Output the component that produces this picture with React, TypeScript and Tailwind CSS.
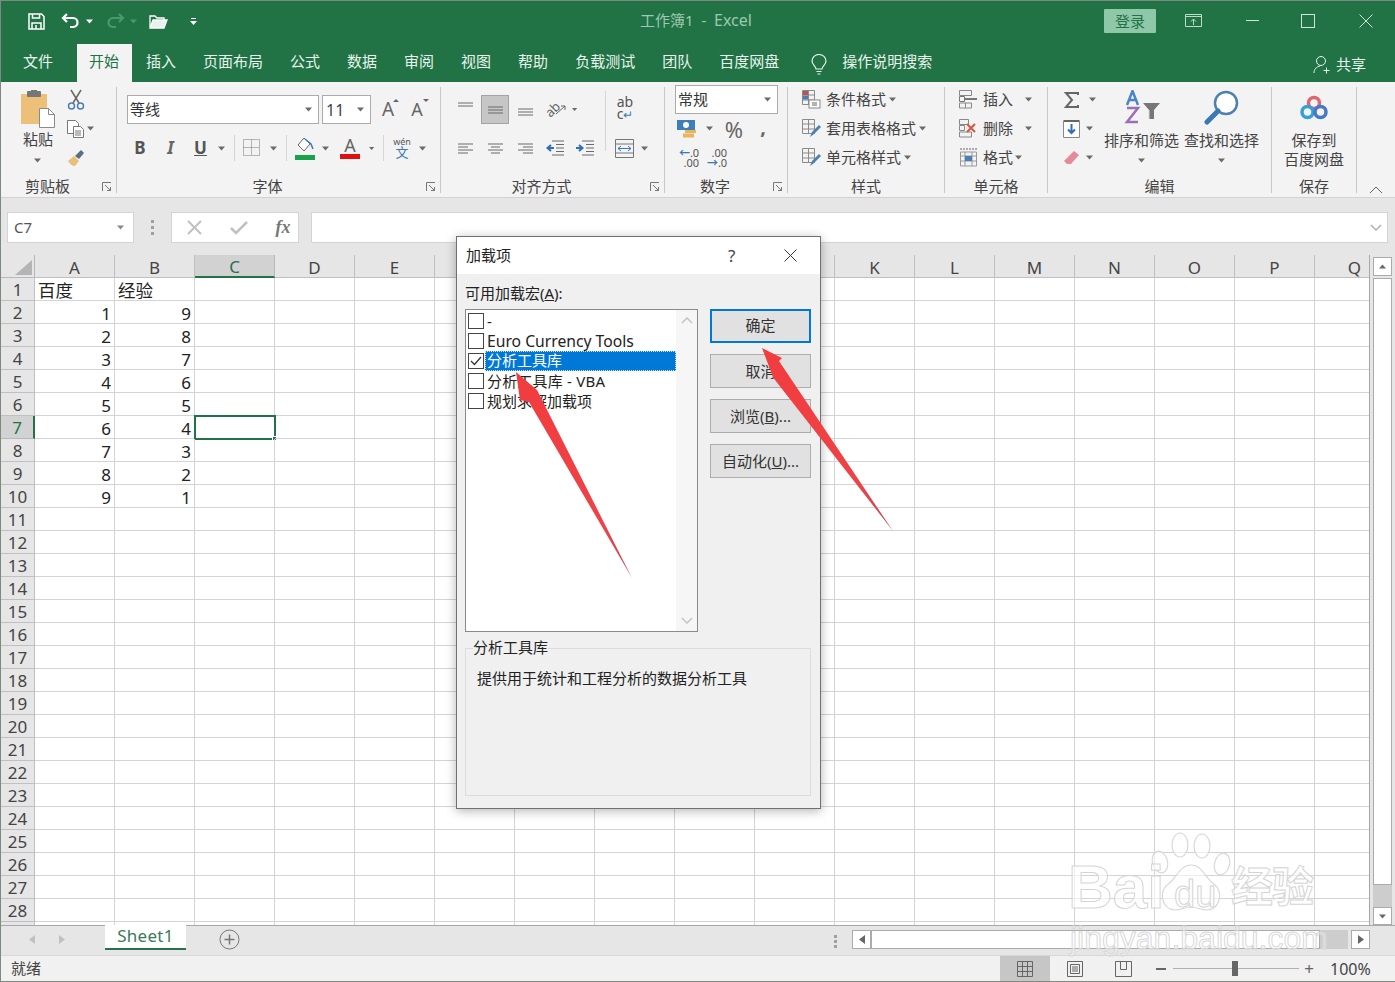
import React from "react";

const FONT = { fontFamily: '"Noto Sans","Noto Sans CJK SC",sans-serif' };

const Caret = ({ c = "#6a6a6a" }: { c?: string }) => (
  <svg width="8" height="5" viewBox="0 0 8 5"><path d="M0 .5h7L3.5 4.5z" fill={c} /></svg>
);
const Cell = ({ c, children }: { c: string; children?: React.ReactNode }) => (
  <div className={`flex items-center justify-center shrink-0 ${c}`}>{children}</div>
);
const CaretCell = ({ c }: { c: string }) => <Cell c={c}><Caret /></Cell>;
const Sep = ({ c }: { c: string }) => (
  <Cell c={c}><div className="w-px h-[26px] bg-[#d6d6d6]" /></Cell>
);

const Launcher = () => (
  <svg width="10" height="10" viewBox="0 0 10 10" fill="none" stroke="#777">
    <path d="M.5 9V.5H9M3 3l5.5 5.5M5 8.5h3.5V5" />
  </svg>
);

function Group({ w, label, launcher, children }: { w: string; label: string; launcher?: boolean; children: React.ReactNode }) {
  return (
    <div className={`shrink-0 h-[106px] mt-[5px] border-r border-[#c8c8c8] flex flex-col relative ${w}`}>
      <div className="h-[90px] flex flex-col">{children}</div>
      <div className={launcher
        ? "h-[16px] pr-[22px] flex items-center justify-center text-[15px] leading-none text-[#444] relative top-[1px]"
        : "h-[16px] flex items-center justify-center text-[15px] leading-none text-[#444] relative top-[1px]"}>{label}</div>
      {launcher && <div className="absolute right-[4px] bottom-[1px]"><Launcher /></div>}
    </div>
  );
}

/* Alignment lines */
const Lines = ({ kind }: { kind: "top" | "mid" | "bot" | "left" | "center" | "right" }) => {
  const p: Record<string, string> = {
    top: "M1 3h15M1 6h15",
    mid: "M1 5h15M1 8h15M1 11h15",
    bot: "M1 7h15M1 10h15M1 13h15",
    left: "M1 3h15M1 6h10M1 9h15M1 12h10",
    center: "M1 3h15M4 6h9M1 9h15M4 12h9",
    right: "M1 3h15M6 6h10M1 9h15M6 12h10",
  };
  return <svg width="17" height="15" viewBox="0 0 17 15" fill="none" stroke="#6a6a6a"><path d={p[kind]} /></svg>;
};
const Indent = ({ right }: { right?: boolean }) => (
  <svg width="20" height="17" viewBox="0 0 20 17" fill="none">
    <path d="M7 1h12M11 4.500h8M11 8h8M11 11.500h8M7 15h12" stroke="#6a6a6a" />
    <path d={right ? "M1 8h6M4 5l3.500 3L4 11" : "M9 8H3M6 5L2.500 8 6 11"} stroke="#2f6fb3" strokeWidth="2" />
  </svg>
);

const SmallGridIcon = ({ children }: { children?: React.ReactNode }) => (
  <svg width="19" height="19" viewBox="0 0 19 19" fill="none">
    <path d="M.5.5h12v14H.5zM.5 5h12M.5 10h12M6.500.5v14" stroke="#8a8a8a" />
    {children}
  </svg>
);

function FontGroup() {
  return (
    <Group w="w-[324px]" label="字体" launcher>
      <div className="flex items-center mt-[8px] pl-[10px]">
        <div className="w-[192px] h-[29px] bg-white border border-[#ababab] flex items-center justify-between pl-[2px] pr-[5px] text-[15px] text-[#333]">
          <span>等线</span><Caret />
        </div>
        <div className="ml-[3px] w-[49px] h-[29px] bg-white border border-[#ababab] flex items-center justify-between pl-[3px] pr-[5px] text-[16px] text-[#444]">
          <span>11</span><Caret />
        </div>
        <Cell c="w-[34px] text-[19px] text-[#666] relative">
          <span>A</span><svg className="absolute right-[6px] top-[3px]" width="6" height="4" viewBox="0 0 6 4"><path d="M0 4l3-3 3 3z" fill="#666" /></svg>
        </Cell>
        <Cell c="w-[24px] text-[18px] text-[#666] relative">
          <span>A</span><svg className="absolute right-0 top-[3px]" width="6" height="4" viewBox="0 0 6 4"><path d="M0 0l3 3 3-3z" fill="#666" /></svg>
        </Cell>
      </div>
      <div className="flex items-center h-[26px] mt-[11px] pl-[8px]">
        <Cell c="w-[30px] text-[17px] font-bold text-[#555]">B</Cell>
        <Cell c="w-[31px] text-[17px] italic font-bold text-[#666]">I</Cell>
        <Cell c="w-[29px] text-[17px] font-bold underline text-[#555]">U</Cell>
        <CaretCell c="w-[14px]" />
        <Sep c="w-[10px]" />
        <Cell c="w-[26px]">
          <svg width="18" height="18" viewBox="0 0 18 18" fill="none" stroke="#777" strokeDasharray="1 1"><path d="M.5.5h16v16H.5zM8.500.5v16M.5 8.500h16" /></svg>
        </Cell>
        <CaretCell c="w-[18px]" />
        <Sep c="w-[6px]" />
        <Cell c="w-[32px]">
          <svg width="22" height="24" viewBox="0 0 22 24" fill="none">
            <path d="M10 2L4 9l6 6 6-7z" stroke="#666" fill="#fff" />
            <path d="M11 3l6 5 2 5" stroke="#3a7ab8" strokeWidth="1.500" />
            <rect x="1" y="19" width="20" height="5" fill="#17a34a" />
          </svg>
        </Cell>
        <CaretCell c="w-[10px]" />
        <Cell c="w-[38px]">
          <div className="flex flex-col items-center">
            <span className="text-[18px] leading-[17px] text-[#666]">A</span>
            <div className="w-[20px] h-[5px] bg-[#e01010]" />
          </div>
        </Cell>
        <CaretCell c="w-[6px]" />
        <Sep c="w-[16px]" />
        <Cell c="w-[22px]">
          <div className="flex flex-col items-center leading-none">
            <span className="text-[9px] leading-[9px] text-[#555]">wén</span>
            <span className="text-[13px] leading-[13px] text-[#3a7ab8]">文</span>
          </div>
        </Cell>
        <CaretCell c="w-[20px]" />
      </div>
    </Group>
  );
}

function AlignGroup() {
  return (
    <Group w="w-[224px]" label="对齐方式" launcher>
      <div className="flex items-center mt-[8px] pl-[9px] h-[29px]">
        <Cell c="w-[30px] -mt-[4px]"><Lines kind="top" /></Cell>
        <Cell c="ml-[1px] w-[28px] h-[29px] bg-[#c6c6c6] border border-[#a4a4a4]"><Lines kind="mid" /></Cell>
        <Cell c="ml-px w-[30px]"><Lines kind="bot" /></Cell>
        <Cell c="w-[32px] relative">
          <span className="text-[13px] leading-none text-[#666] -rotate-45 -ml-[6px]">ab</span>
          <svg className="absolute left-[15px] top-[2px]" width="12" height="10" viewBox="0 0 12 10" fill="none" stroke="#666"><path d="M1 9l9-8M6 1h4v4" /></svg>
        </Cell>
        <CaretCell c="w-[6px]" />
        <Cell c="w-[27px]" />
        <div className="w-px h-[60px] bg-[#d6d6d6] self-start mt-[-4px]" />
        <Cell c="w-[38px] -mt-[2px]">
          <div className="relative text-[14px] leading-[12px] text-[#555]">
            <div>ab</div><div>c<span className="text-[#3a7ab8] text-[12px]">↵</span></div>
          </div>
        </Cell>
      </div>
      <div className="flex items-center h-[26px] mt-[11px] pl-[9px]">
        <Cell c="w-[30px]"><Lines kind="left" /></Cell>
        <Cell c="w-[30px]"><Lines kind="center" /></Cell>
        <Cell c="w-[30px]"><Lines kind="right" /></Cell>
        <Cell c="w-[30px]"><Indent /></Cell>
        <Cell c="w-[30px]"><Indent right /></Cell>
        <Cell c="w-[11px]" />
        <Cell c="w-[27px]">
          <svg width="19" height="19" viewBox="0 0 19 19" fill="none"><path d="M.5.5h18v18H.5zM.5 5h18M.5 14h18" stroke="#777" /><path d="M3 9.500h13M6 7L3 9.500 6 12M13 7l3 2.500-3 2.500" stroke="#3a7ab8" /></svg>
        </Cell>
        <CaretCell c="w-[14px]" />
      </div>
    </Group>
  );
}

function NumberGroup() {
  return (
    <Group w="w-[123px]" label="数字" launcher>
      <div className="ml-[10px] -mt-[2px] w-[103px] h-[29px] bg-white border border-[#ababab] flex items-center justify-between pl-[2px] pr-[5px] text-[15px] text-[#333]">
        <span>常规</span><Caret />
      </div>
      <div className="flex items-center h-[29px] ml-[12px]">
        <Cell c="w-[21px]">
          <svg width="21" height="20" viewBox="0 0 21 20" fill="none">
            <rect x="0" y="1" width="18" height="10" fill="#3d7ebd" /><circle cx="9" cy="6" r="3" fill="#fff" />
            <rect x="8" y="11" width="11" height="3" fill="#e8b45c" /><rect x="6" y="14.500" width="11" height="4" fill="#e8b45c" />
          </svg>
        </Cell>
        <CaretCell c="w-[24px]" />
        <Cell c="w-[24px] text-[22px] leading-none text-[#666]">%</Cell>
        <Cell c="w-[34px] text-[20px] font-bold leading-none text-[#666] -mt-[4px]">,</Cell>
      </div>
      <div className="flex items-center h-[29px] ml-[10px]">
        <Cell c="w-[28px]">
          <div className="text-[11px] leading-[10px] text-[#555] text-right">
            <div><span className="text-[#3a7ab8] font-bold">←</span>.0</div><div>.00</div>
          </div>
        </Cell>
        <Cell c="w-[28px]">
          <div className="text-[11px] leading-[10px] text-[#555] text-right">
            <div>.00</div><div><span className="text-[#3a7ab8] font-bold">→</span>.0</div>
          </div>
        </Cell>
      </div>
    </Group>
  );
}

const BrushIcon = () => <path d="M8 18l2-5 7-7 2 2-7 7z" fill="#4a7fb5" />;

function StyleRow({ icon, text }: { icon: React.ReactNode; text: string }) {
  return (
    <div className="flex items-center h-[29px] pl-[14px] first:-mt-[2px]">
      <div className="w-[24px] shrink-0">{icon}</div>
      <span className="text-[15px] text-[#444] leading-none">{text}</span>
      <div className="ml-[3px]"><Caret /></div>
    </div>
  );
}

function CellRow({ icon, text, caret }: { icon: React.ReactNode; text: string; caret: string }) {
  return (
    <div className="flex items-center h-[29px] pl-[14px] first:-mt-[2px]">
      <div className="w-[24px] shrink-0">{icon}</div>
      <span className="text-[15px] text-[#444] leading-none">{text}</span>
      <div className={caret}><Caret /></div>
    </div>
  );
}

function EditGroup() {
  return (
    <Group w="w-[224px]" label="编辑">
      <div className="flex h-full">
        <div className="w-[56px] shrink-0 flex flex-col -mt-[2px]">
          <div className="flex items-center h-[29px] pl-[12px]">
            <Cell c="w-[22px]"><svg width="15" height="16" viewBox="0 0 15 16" fill="none"><path d="M14 3V1H2l6 7-6 7h12v-2" stroke="#666" strokeWidth="2" /></svg></Cell>
            <Cell c="w-[22px]"><Caret /></Cell>
          </div>
          <div className="flex items-center h-[29px] pl-[12px]">
            <Cell c="w-[22px]"><svg width="17" height="18" viewBox="0 0 17 18" fill="none"><path d="M.5 1.500h16v16H.5z" stroke="#888" fill="#fff" /><path d="M.5 1h16" stroke="#666" strokeWidth="2" /><path d="M8.500 4v9M5 9.500l3.500 3.500L12 9.500" stroke="#2f6fb3" strokeWidth="2" /></svg></Cell>
            <Cell c="w-[16px]"><Caret /></Cell>
          </div>
          <div className="flex items-center h-[29px] pl-[12px]">
            <Cell c="w-[22px]"><svg width="17" height="16" viewBox="0 0 17 16"><path d="M11 1l5 4-8 9H4L1 11z" fill="#e58a9b" /></svg></Cell>
            <Cell c="w-[16px]"><Caret /></Cell>
          </div>
        </div>
        <div className="w-[75px] shrink-0 flex flex-col items-center">
          <div className="h-[40px] mt-[3px] flex items-start">
            <svg width="36" height="36" viewBox="0 0 36 36" fill="none">
              <path d="M19 13h17l-6 7v9h-5v-9z" fill="#777" /><path d="M25 20v9" stroke="#ddd" />
              <path d="M3 15L8.500 1 14 15M5 10h7" stroke="#4a86c5" strokeWidth="2.500" />
              <path d="M3 18h11L3 32h11" stroke="#9a6fb5" strokeWidth="2.500" />
            </svg>
          </div>
          <div className="text-[15px] leading-[20px] text-[#444] whitespace-nowrap">排序和筛选</div>
          <div className="mt-[8px]"><Caret /></div>
        </div>
        <div className="ml-[5px] w-[75px] shrink-0 flex flex-col items-center">
          <div className="h-[40px] mt-[3px] flex items-start">
            <svg width="36" height="36" viewBox="0 0 36 36" fill="none">
              <circle cx="22" cy="13" r="11" stroke="#4d80b0" strokeWidth="2.500" fill="#fff" />
              <path d="M14 21L3 32" stroke="#3a78b5" strokeWidth="5" strokeLinecap="round" />
            </svg>
          </div>
          <div className="text-[15px] leading-[20px] text-[#444] whitespace-nowrap">查找和选择</div>
          <div className="mt-[8px]"><Caret /></div>
        </div>
      </div>
    </Group>
  );
}

function Ribbon() {
  return (
    <div className="h-[116px] bg-[#f3f3f3] border-b border-[#d2d2d2] flex shrink-0">
      <Group w="w-[116px]" label="剪贴板" launcher>
        <div className="flex h-full">
          <div className="w-[74px] shrink-0 flex flex-col items-center">
            <svg className="mt-[3px]" width="38" height="38" viewBox="0 0 38 38">
              <rect x="2" y="4" width="26" height="30" fill="#ecc078" />
              <rect x="8" y="1" width="14" height="6" fill="#777" rx="1" />
              <rect x="12" y="0" width="6" height="3" fill="#777" />
              <path d="M20.500 18.500h9l6 6v13h-15z" fill="#fff" stroke="#8a8a8a" />
              <path d="M29.500 18.500v6h6" fill="none" stroke="#8a8a8a" />
            </svg>
            <div className="text-[15px] leading-[20px] text-[#444] mt-[1px]">粘贴</div>
            <div className="mt-[9px]"><Caret /></div>
          </div>
          <div className="flex flex-col -mt-[2px] -ml-[8px]">
            <div className="h-[29px] flex items-center">
              <svg width="18" height="21" viewBox="0 0 18 21" fill="none"><path d="M4 1l8 13M14 1L6 14" stroke="#666" strokeWidth="1.500" /><circle cx="4.500" cy="17" r="3" stroke="#4d80b0" strokeWidth="1.500" /><circle cx="13.500" cy="17" r="3" stroke="#4d80b0" strokeWidth="1.500" /></svg>
            </div>
            <div className="h-[29px] flex items-center">
              <svg width="18" height="18" viewBox="0 0 18 18" fill="#fff" stroke="#777"><path d="M.5.5h8l3 3v10h-11z" /><path d="M6.500 6.500h7l3 3v8h-10z" /><path d="M8 11h6M8 13h6M8 15h6" fill="none" /></svg>
              <div className="ml-[2px]"><Caret /></div>
            </div>
            <div className="h-[29px] flex items-center">
              <svg width="18" height="18" viewBox="0 0 18 18"><path d="M1 12l6-5 5 5-4 5c-3 0-5-2-7-5z" fill="#e8c07a" /><path d="M8 7l6-6 3 3-5 6z" fill="#5a6f85" /></svg>
            </div>
          </div>
        </div>
      </Group>
      <FontGroup />
      <AlignGroup />
      <NumberGroup />
      <Group w="w-[157px]" label="样式">
        <StyleRow text="条件格式" icon={<SmallGridIcon><rect x="1" y="1" width="5" height="4" fill="#c0504d" /><rect x="1" y="5.500" width="5" height="4" fill="#4a7fb5" /><rect x="7" y="10" width="11" height="8" fill="#fff" stroke="#888" /><path d="M10 13h5M10 15h5" stroke="#666" /></SmallGridIcon>} />
        <StyleRow text="套用表格格式" icon={<SmallGridIcon><BrushIcon /></SmallGridIcon>} />
        <StyleRow text="单元格样式" icon={<SmallGridIcon><BrushIcon /></SmallGridIcon>} />
      </Group>
      <Group w="w-[103px]" label="单元格">
        <CellRow text="插入" caret="ml-[12px]" icon={<svg width="19" height="19" viewBox="0 0 19 19" fill="none"><path d="M.5.5h12v5H.5zM.5 13h12v5H.5zM6.500 13v5" stroke="#888" /><path d="M.5 6.500h5v5h-5z" stroke="#777" /><path d="M6 9h12" stroke="#777" strokeWidth="2" /></svg>} />
        <CellRow text="删除" caret="ml-[12px]" icon={<svg width="19" height="19" viewBox="0 0 19 19" fill="none"><path d="M.5.5h9v5h-9zM.5 13h12v5H.5zM.5 6.500h5v5h-5z" stroke="#888" /><path d="M8 5l8 8M16 5l-8 8" stroke="#d9553a" strokeWidth="2" /></svg>} />
        <CellRow text="格式" caret="ml-[2px]" icon={<svg width="19" height="19" viewBox="0 0 19 19" fill="none"><path d="M1 1h17" stroke="#666" strokeDasharray="2 1" /><path d="M1.500 4h16v14h-16zM1.500 8h16M1.500 13h16M6 4v14M13 4v14" stroke="#999" /><rect x="6" y="8" width="7" height="5" fill="#4a7fb5" /></svg>} />
      </Group>
      <EditGroup />
      <Group w="w-[85px]" label="保存">
        <div className="flex flex-col items-center">
          <svg className="mt-[8px]" width="28" height="26" viewBox="0 0 28 26" fill="none">
            <circle cx="14" cy="8" r="5.500" stroke="#e0656f" strokeWidth="3.500" />
            <circle cx="7.500" cy="17" r="5.500" stroke="#35a0d8" strokeWidth="3.500" />
            <circle cx="20.500" cy="17" r="5.500" stroke="#4677c9" strokeWidth="3.500" />
          </svg>
          <div className="text-[15px] leading-[19px] text-[#444] mt-[10px]">保存到</div>
          <div className="text-[15px] leading-[19px] text-[#444] whitespace-nowrap">百度网盘</div>
        </div>
      </Group>
      <div className="flex-1 flex items-end justify-center pb-[3px]">
        <svg width="14" height="8" viewBox="0 0 14 8" fill="none" stroke="#666"><path d="M1 7l6-6 6 6" /></svg>
      </div>
    </div>
  );
}

const TABS = ["插入", "页面布局", "公式", "数据", "审阅", "视图", "帮助", "负载测试", "团队", "百度网盘"];

function TitleBar() {
  return (
    <div className="h-[40px] bg-[#217346] flex items-center relative shrink-0 text-white">
      <Cell c="w-[22px] ml-[24px]">
        <svg width="17" height="17" viewBox="0 0 17 17" fill="none" stroke="#fff" strokeWidth="1.500"><path d="M1 1h12.500L16 3.500V16H1z" /><path d="M4.500 1v4h7V1M4 16v-6h9v6" /><path d="M8 12v4" /></svg>
      </Cell>
      <Cell c="w-[24px] ml-[11px]">
        <svg width="19" height="16" viewBox="0 0 19 16" fill="none" stroke="#fff" strokeWidth="2.200"><path d="M6 1L2 5l4 4" /><path d="M2 5h10c6 0 6 9 0 9H9" /></svg>
      </Cell>
      <Cell c="w-[8px] ml-[4px]"><Caret c="#fff" /></Cell>
      <Cell c="w-[24px] ml-[9px]">
        <svg width="19" height="16" viewBox="0 0 19 16" fill="none" stroke="#4c9670" strokeWidth="2.200"><path d="M13 1l4 4-4 4" /><path d="M17 5H7c-6 0-6 9 0 9h3" /></svg>
      </Cell>
      <Cell c="w-[8px] ml-[3px]"><Caret c="#4c9670" /></Cell>
      <Cell c="w-[20px] ml-[10px]">
        <svg width="19" height="15" viewBox="0 0 19 15" fill="none" stroke="#fff" strokeWidth="1.300"><path d="M1 13V2h5l2 2h7v2" /><path d="M1 14l3-8h14l-3 8z" fill="#e8f2ec" /></svg>
      </Cell>
      <Cell c="w-[8px] ml-[21px]">
        <svg width="7" height="7" viewBox="0 0 7 7" fill="#fff"><path d="M1 0h5v1H1zM0 3h7L3.500 7z" /></svg>
      </Cell>
      <div className="absolute left-[639px] top-[9px] text-[15px] leading-[20px] text-[#9cc9af] whitespace-pre">工作簿1  -  <span className="text-[16px]">Excel</span></div>
      <div className="absolute left-[1103px] top-[8px] w-[52px] h-[24px] bg-[#8fc8a9] rounded-[1px] flex items-center justify-center text-[15px] text-[#217346]">登录</div>
      <div className="absolute left-[1184px] top-[12px]">
        <svg width="17" height="15" viewBox="0 0 17 15" fill="none" stroke="#bcdcc9"><path d="M.5 1.500h16v12H.5zM.5 3.500h16M8.500 12V6M6 8.500l2.500-2.500L11 8.500" /></svg>
      </div>
      <div className="absolute left-[1245px] top-[19px] w-[13px] h-px bg-[#cfe5d8]" />
      <div className="absolute left-[1300px] top-[13px] w-[14px] h-[14px] border border-[#cfe5d8]" />
      <div className="absolute left-[1358px] top-[13px]">
        <svg width="14" height="14" viewBox="0 0 14 14" fill="none" stroke="#cfe5d8"><path d="M.5.5l13 13M13.500.5l-13 13" /></svg>
      </div>
    </div>
  );
}

function TabBar() {
  return (
    <div className="h-[41px] bg-[#217346] flex items-end shrink-0 text-[15px] relative">
      <div className="ml-[9px] px-[13px] h-[38px] leading-[34px] text-[#e9f3ed]">文件</div>
      <div className="ml-[11px] px-[12px] w-[55px] h-[38px] leading-[34px] bg-[#f3f3f3] text-[#217346]">开始</div>
      {TABS.map((t) => (
        <div key={t} className="px-[13px] ml-px first:ml-0 h-[38px] leading-[34px] text-[#e9f3ed] whitespace-nowrap">{t}</div>
      ))}
      <div className="ml-[19px] h-[36px] flex items-center">
        <svg width="16" height="21" viewBox="0 0 16 21" fill="none" stroke="#e9f3ed" strokeWidth="1.200"><path d="M5 15c0-3-4-4-4-8a7 6.500 0 0 1 14 0c0 4-4 5-4 8zM5.500 17.500h5M6.500 20h3" /></svg>
      </div>
      <div className="ml-[15px] h-[38px] leading-[34px] text-[#e9f3ed]">操作说明搜索</div>
      <div className="absolute left-[1312px] top-[12px] flex items-center h-[22px] text-[#e9f3ed]">
        <svg width="17" height="19" viewBox="0 0 17 19" fill="none" stroke="#e9f3ed"><circle cx="8" cy="6" r="4.500" /><path d="M1 18c0-4 3-6.500 6-7M10.500 15.500h6M13.500 12.500v6" /></svg>
        <span className="ml-[6px] text-[15px]">共享</span>
      </div>
    </div>
  );
}

function FormulaBar() {
  return (
    <div className="h-[57px] bg-[#e6e6e6] flex items-start pt-[14px] shrink-0">
      <div className="ml-[6px] w-[127px] h-[31px] bg-white border border-[#d4d4d4] flex items-center justify-between pl-[6px] pr-[8px] text-[15px] text-[#555]">
        <span>C7</span><Caret c="#888" />
      </div>
      <div className="w-[37px] h-[31px] flex flex-col items-center justify-center gap-[3px]">
        <div className="w-[3px] h-[3px] bg-[#a0a0a0]" /><div className="w-[3px] h-[3px] bg-[#a0a0a0]" /><div className="w-[3px] h-[3px] bg-[#a0a0a0]" />
      </div>
      <div className="w-[128px] h-[31px] bg-white border border-[#d4d4d4] flex items-center">
        <Cell c="w-[44px]"><svg width="15" height="15" viewBox="0 0 15 15" fill="none" stroke="#c0c0c0" strokeWidth="2"><path d="M1 1l13 13M14 1L1 14" /></svg></Cell>
        <Cell c="w-[46px]"><svg width="18" height="14" viewBox="0 0 18 14" fill="none" stroke="#c0c0c0" strokeWidth="2.500"><path d="M1 7l5 5L17 1" /></svg></Cell>
        <Cell c="w-[42px] text-[18px] italic font-bold text-[#777]"><span style={{ fontFamily: '"Liberation Serif",serif' }}>fx</span></Cell>
      </div>
      <div className="ml-[12px] w-[1077px] h-[31px] bg-white border border-[#d4d4d4] flex items-center justify-end pr-[5px]">
        <svg width="12" height="7" viewBox="0 0 12 7" fill="none" stroke="#b0b0b0" strokeWidth="1.500"><path d="M1 1l5 5 5-5" /></svg>
      </div>
    </div>
  );
}

const COLS = "ABCDEFGHIJKLMNOPQ".split("");
const ROWS = Array.from({ length: 29 }, (_, i) => i + 1);
const DATA: Record<number, [string, string]> = {
  1: ["百度", "经验"], 2: ["1", "9"], 3: ["2", "8"], 4: ["3", "7"], 5: ["4", "6"], 6: ["5", "5"],
  7: ["6", "4"], 8: ["7", "3"], 9: ["8", "2"], 10: ["9", "1"],
};

function Sheet() {
  return (
    <div className="flex-1 min-h-0 flex bg-white">
      <div className="flex-1 min-w-0 overflow-hidden border-r border-[#a8a8a8]">
        <div className="flex h-[23px]">
          <div className="w-[34px] shrink-0 bg-[#e6e6e6] border-b border-r border-[#b8b8b8] flex items-end justify-end p-[2px]">
            <svg width="17" height="15" viewBox="0 0 17 15"><path d="M17 0v15H0z" fill="#b4b4b4" /></svg>
          </div>
          {COLS.map((c) => (
            <div key={c} className={c === "C"
              ? "w-[80px] shrink-0 bg-[#d2d2d2] border-b-2 border-[#217346] border-r border-r-[#b8b8b8] flex items-center justify-center pt-[3px] text-[17px] text-[#2f6b4c]"
              : "w-[80px] shrink-0 bg-[#e6e6e6] border-b border-r border-[#c0c0c0] flex items-center justify-center pt-[3px] text-[17px] text-[#444]"}>{c}</div>
          ))}
        </div>
        {ROWS.map((r) => (
          <div key={r} className="flex h-[23px]">
            <div className={r === 7
              ? "w-[34px] shrink-0 bg-[#d2d2d2] border-b border-[#b8b8b8] border-r-2 border-r-[#217346] flex items-center justify-center pt-[2px] text-[17px] text-[#217346]"
              : "w-[34px] shrink-0 bg-[#e6e6e6] border-b border-r border-[#c0c0c0] flex items-center justify-center pt-[2px] text-[17px] text-[#444]"}>{r < 29 ? r : ""}</div>
            {COLS.map((c, i) => {
              const v = DATA[r]?.[i];
              const text = i < 2 && v;
              return (
                <div key={c} className={r === 1
                  ? "w-[80px] shrink-0 border-b border-r border-[#d4d4d4] flex items-center pl-[3px] pt-[2px] text-[17.5px] text-[#222] relative"
                  : "w-[80px] shrink-0 border-b border-r border-[#d4d4d4] flex items-center justify-end pr-[3px] pt-[3px] text-[17px] text-[#222] relative"}>
                  {text}
                  {r === 7 && c === "C" && (
                    <div className="absolute -left-px -top-px w-[82px] h-[25px] border-2 border-[#217346]">
                      <div className="absolute -right-[3px] -bottom-[3px] w-[5px] h-[5px] bg-[#217346] border border-white" />
                    </div>
                  )}
                </div>
              );
            })}
          </div>
        ))}
      </div>
      <div className="w-[25px] shrink-0 bg-[#e6e6e6] pl-[3px] pr-[3px] pt-[2px] flex flex-col">
        <div className="h-[19px] bg-white border border-[#ababab] flex items-center justify-center rotate-180"><Caret /></div>
        <div className="h-[607px] mt-[2px] bg-white border border-[#ababab]" />
        <div className="flex-1 bg-[#cdcdcd]" />
        <div className="h-[18px] bg-white border border-[#ababab] flex items-center justify-center"><Caret /></div>
      </div>
    </div>
  );
}

function SheetBar() {
  return (
    <div className="h-[30px] bg-[#e6e6e6] border-t border-[#a8a8a8] flex shrink-0 relative">
      <Cell c="w-[30px] ml-[16px] h-[26px]"><svg width="6" height="9" viewBox="0 0 6 9"><path d="M6 0v9L0 4.500z" fill="#c0c0c0" /></svg></Cell>
      <Cell c="w-[30px] h-[26px]"><svg width="6" height="9" viewBox="0 0 6 9"><path d="M0 0v9l6-4.500z" fill="#c0c0c0" /></svg></Cell>
      <div className="ml-[28px] w-[81px] h-[25px] -mt-px bg-white border-b-2 border-[#2a6e4a] flex items-center justify-center pb-[2px] text-[17px] text-[#3a7a5a] tracking-[0.3px]">Sheet1</div>
      <Cell c="ml-[33px] h-[26px]">
        <svg width="21" height="21" viewBox="0 0 21 21" fill="none" stroke="#777"><circle cx="10.500" cy="10.500" r="9.500" /><path d="M5.500 10.500h10M10.500 5.500v10" strokeWidth="1.500" /></svg>
      </Cell>
      <div className="absolute left-[833px] top-[9px] flex flex-col gap-[2px]">
        <div className="w-[3px] h-[3px] bg-[#a0a0a0]" /><div className="w-[3px] h-[3px] bg-[#a0a0a0]" /><div className="w-[3px] h-[3px] bg-[#a0a0a0]" />
      </div>
      <div className="absolute left-[851px] top-[4px] w-[518px] h-[19px] flex">
        <div className="w-[19px] bg-white border border-[#ababab] flex items-center justify-center"><svg width="6" height="9" viewBox="0 0 6 9"><path d="M6 0v9L0 4.500z" fill="#666" /></svg></div>
        <div className="w-[449px] bg-white border border-[#ababab]" />
        <div className="flex-1 bg-[#cdcdcd]" />
        <div className="w-[19px] ml-[3px] bg-white border border-[#ababab] flex items-center justify-center"><svg width="6" height="9" viewBox="0 0 6 9"><path d="M0 0v9l6-4.500z" fill="#666" /></svg></div>
      </div>
    </div>
  );
}

function StatusBar() {
  return (
    <div className="h-[26px] bg-[#f1f1f1] flex items-center shrink-0 text-[#444] relative border-t border-[#d8d8d8]">
      <div className="ml-[10px] text-[15px] -mt-[1px]">就绪</div>
      <div className="ml-auto flex items-center h-full">
        <Cell c="w-[50px] h-full bg-[#c6c6c6]">
          <svg width="16" height="16" viewBox="0 0 16 16" fill="none" stroke="#666"><path d="M.5.5h15v15H.5zM5.500.5v15M10.500.5v15M.5 5.500h15M.5 10.500h15" /></svg>
        </Cell>
        <Cell c="w-[49px] h-full">
          <svg width="16" height="16" viewBox="0 0 16 16" fill="none" stroke="#666"><path d="M.5.5h15v15H.5zM3.500 3.500h9v9h-9zM5 6h6M5 8h6M5 10h6" /></svg>
        </Cell>
        <Cell c="w-[49px] h-full">
          <svg width="17" height="16" viewBox="0 0 17 16" fill="none" stroke="#666"><path d="M.5.5h16v15H.5zM5.500.5v8h6V.5" /></svg>
        </Cell>
        <Cell c="w-[26px] h-full"><div className="w-[10px] h-[2px] bg-[#666] -ml-[1px]" /></Cell>
        <div className="w-[126px] h-px bg-[#b0b0b0] relative -ml-[1px]">
          <div className="absolute left-[59px] -top-[7px] w-[6px] h-[15px] bg-[#666]" />
        </div>
        <Cell c="w-[20px] h-full text-[17px] text-[#666]">+</Cell>
        <div className="w-[76px] text-[16px] pl-[11px]">100%</div>
      </div>
    </div>
  );
}

const LIST = [
  { t: "-", c: "" }, { t: "Euro Currency Tools", c: "text-[15.7px]" }, { t: "分析工具库", sel: true, c: "" }, { t: "分析工具库 - VBA", c: "tracking-[0.2px]" }, { t: "规划求解加载项", c: "" },
];

function DialogButton({ children, primary }: { children: React.ReactNode; primary?: boolean }) {
  return (
    <div className={primary
      ? "h-[34px] w-[101px] pb-[2px] bg-[#e1e1e1] border-2 border-[#0078d7] flex items-center justify-center text-[15px] text-[#333]"
      : "h-[34px] w-[101px] bg-[#e1e1e1] border border-[#adadad] flex items-center justify-center text-[15px] text-[#333]"}>{children}</div>
  );
}

function Dialog() {
  return (
    <div className="absolute left-[456px] top-[236px] w-[365px] h-[573px] bg-[#f0f0f0] border border-[#707070] shadow-[0_2px_10px_rgba(0,0,0,0.3)] flex flex-col text-[15px] text-[#222]">
      <div className="h-[37px] bg-white flex items-center shrink-0 relative">
        <span className="ml-[9px]">加载项</span>
        <span className="absolute left-[271px] text-[17px] text-[#444]">?</span>
        <svg className="absolute left-[327px]" width="13" height="13" viewBox="0 0 13 13" fill="none" stroke="#333"><path d="M.5.500l12 12M12.500.5l-12 12" /></svg>
      </div>
      <div className="flex-1 px-[8px] relative">
        <div className="mt-[9px] h-[22px] leading-[20px]">可用加载宏(<span className="underline">A</span>):</div>
        <div className="flex mt-[4px]">
          <div className="w-[233px] h-[323px] bg-white border border-[#8a8a8a] flex">
            <div className="w-[210px] pt-[1px] pl-[2px]">
              {LIST.map((it) => (
                <div key={it.t} className="h-[20px] flex items-center">
                  <div className="w-[16px] h-[16px] border border-[#444] bg-white shrink-0 flex items-center justify-center">
                    {it.sel && <svg width="12" height="10" viewBox="0 0 12 10" fill="none" stroke="#333" strokeWidth="1.300"><path d="M1 5l3.500 3.500L11 1" /></svg>}
                  </div>
                  <div className={it.sel
                    ? "ml-[1px] flex-1 h-[20px] pl-[1px] leading-[17px] bg-[#0078d7] text-white border border-dotted border-[#cfe4f7]"
                    : `ml-[3px] flex-1 h-[20px] leading-[20px] text-[#222] whitespace-nowrap ${it.c}`}>{it.t}</div>
                </div>
              ))}
            </div>
            <div className="flex-1 bg-[#f6f6f6] flex flex-col items-center justify-between py-[7px]">
              <svg width="12" height="7" viewBox="0 0 12 7" fill="none" stroke="#c4c4c4" strokeWidth="1.500"><path d="M1 6l5-5 5 5" /></svg>
              <svg width="12" height="7" viewBox="0 0 12 7" fill="none" stroke="#c4c4c4" strokeWidth="1.500"><path d="M1 1l5 5 5-5" /></svg>
            </div>
          </div>
          <div className="ml-[12px] flex flex-col gap-[11px]">
            <DialogButton primary>确定</DialogButton>
            <DialogButton>取消</DialogButton>
            <DialogButton>浏览(<span className="underline">B</span>)...</DialogButton>
            <DialogButton>自动化(<span className="underline">U</span>)...</DialogButton>
          </div>
        </div>
        <div className="mt-[16px] w-[346px] h-[148px] border border-[#dcdcdc] relative">
          <div className="absolute left-[7px] -top-[11px] h-[20px] leading-[18px] bg-[#f0f0f0]">分析工具库</div>
          <div className="mt-[19px] ml-[11px] leading-[20px]">提供用于统计和工程分析的数据分析工具</div>
        </div>
      </div>
    </div>
  );
}

function Arrows() {
  return (
    <svg className="absolute left-0 top-0 pointer-events-none" width="1395" height="982" viewBox="0 0 1395 982">
      <defs>
        <linearGradient id="a1" x1="0" y1="0" x2="0" y2="1"><stop offset="0" stopColor="#f23c3e" /><stop offset="0.75" stopColor="#ee4347" /><stop offset="1" stopColor="#c04a58" /></linearGradient>
      </defs>
      <polygon points="516,372 537,390 632,578 529,402 520,400" fill="url(#a1)" />
      <polygon points="762,348 782,358 779,361 893,531 775,380 773,377" fill="url(#a1)" />
    </svg>
  );
}

function Watermark() {
  return (
    <div className="absolute left-[1068px] top-[830px] w-[260px] h-[125px] pointer-events-none">
      <svg className="absolute left-[82px] top-[2px]" width="84" height="86" viewBox="0 0 84 86" fill="rgba(255,255,255,0.55)" stroke="#d8d8d8" strokeWidth="1.200">
        <ellipse cx="10" cy="30" rx="7.500" ry="11" transform="rotate(-15 10 30)" />
        <ellipse cx="30" cy="13" rx="8" ry="12" />
        <ellipse cx="52" cy="14" rx="8" ry="12" />
        <ellipse cx="72" cy="32" rx="7.500" ry="11" transform="rotate(15 72 32)" />
        <path d="M41 33c12 0 14 14 24 20 8 6 6 24-8 25-6 0-10-3-16-3s-10 3-16 3c-14-1-16-19-8-25 10-6 12-20 24-20z" />
      </svg>
      <div className="absolute left-0 top-[22px] text-[62px] leading-[70px] text-[rgba(255,255,255,0.6)] [-webkit-text-stroke:1px_#d4d4d4] font-bold" style={{ fontFamily: '"Liberation Sans",sans-serif' }}>Bai</div>
      <div className="absolute left-[106px] top-[44px] text-[38px] leading-[40px] text-[rgba(255,255,255,0.6)] [-webkit-text-stroke:1px_#d4d4d4]" style={{ fontFamily: '"Liberation Sans",sans-serif' }}>du</div>
      <div className="absolute left-[163px] top-[26px] text-[42px] leading-[60px] text-[rgba(255,255,255,0.6)] [-webkit-text-stroke:1px_#d4d4d4] font-bold tracking-[-1px] whitespace-nowrap">经验</div>
      <div className="absolute left-[2px] top-[90px] text-[32px] leading-[36px] text-[rgba(255,255,255,0.35)] [-webkit-text-stroke:1px_#d8d8d8] whitespace-nowrap" style={{ fontFamily: '"Liberation Sans",sans-serif' }}>jingyan.baidu.com</div>
    </div>
  );
}

export default function App() {
  return (
    <div className="w-[1395px] h-[982px] relative overflow-hidden bg-white" style={FONT}>
      <div className="w-full h-full flex flex-col border border-r-0 border-[#7c8a82]">
        <TitleBar />
        <TabBar />
        <Ribbon />
        <FormulaBar />
        <Sheet />
        <SheetBar />
        <StatusBar />
      </div>
      <Dialog />
      <Arrows />
      <Watermark />
    </div>
  );
}
